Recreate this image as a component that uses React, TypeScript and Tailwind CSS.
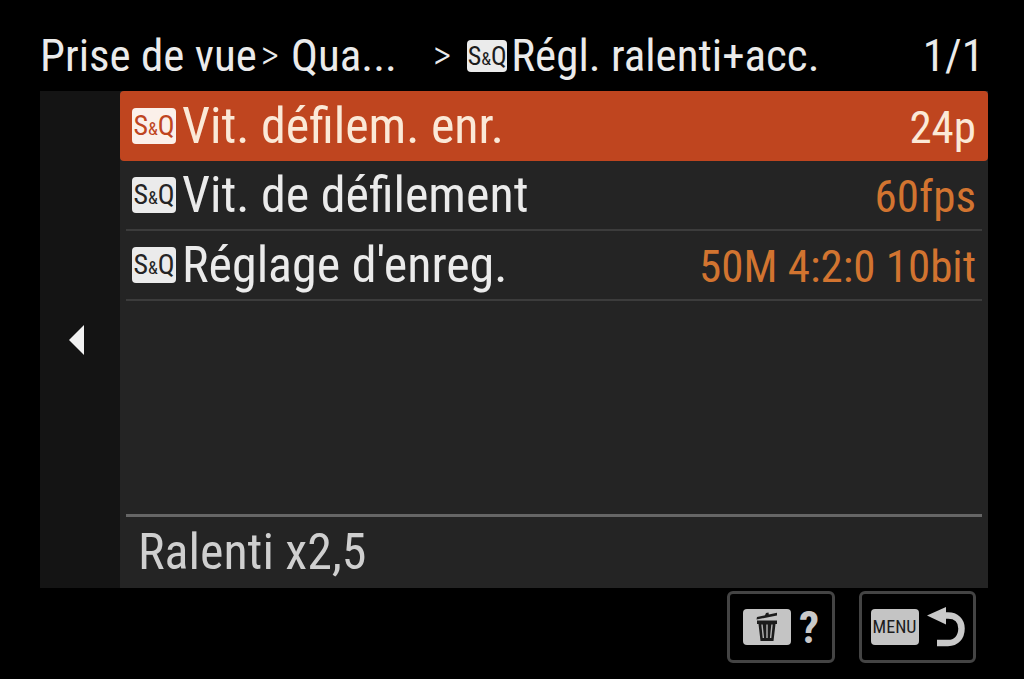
import clsx from 'clsx'

interface MenuItem {
  label: string
  value: string
}

const MENU_ITEMS: MenuItem[] = [
  { label: 'Vit. défilem. enr.', value: '24p' },
  { label: 'Vit. de défilement', value: '60fps' },
  { label: "Réglage d'enreg.", value: '50M 4:2:0 10bit' }
]

interface BadgeProps {
  className?: string
}

// Slow & quick motion mode badge
function ModeBadge({ className = '' }: BadgeProps) {
  return (
    <span className={clsx('flex shrink-0 items-baseline justify-center rounded-sm', className)}>
      <span>S</span>
      <span className="text-[18px]">&amp;</span>
      <span>Q</span>
    </span>
  )
}

function TrashIcon() {
  return (
    <svg width="22" height="30" viewBox="0 0 22 30" aria-hidden="true">
      <path d="M0.5 7.5 L1 5 L9 3.2 L10 1 L12.5 0.6 L12.8 2.4 L21 0.8 L21 3.4 Z" fill="#1c1c1c" />
      <path d="M1 8.5 H21 V12 H19.5 L17.5 29 H4.5 L2.5 12 H1 Z" fill="#1c1c1c" />
      <path d="M6 12.5 L7.4 26 M11 12.5 V26 M16 12.5 L14.6 26" stroke="#b4b4b4" strokeWidth="1.4" />
    </svg>
  )
}

function BackIcon() {
  return (
    <svg width="38" height="40" viewBox="0 0 38 40" aria-hidden="true">
      <path d="M0 8.5 L19 0 V17.5 Z" fill="#c9c9c9" />
      <path
        d="M16 8.5 H21 C29 8.5 34.5 13.5 34.5 21.5 C34.5 30.5 29 36 21 36 H10"
        fill="none"
        stroke="#c9c9c9"
        strokeWidth="6.5"
      />
    </svg>
  )
}

export default function App() {
  return (
    <div className="flex min-h-screen flex-col bg-black pr-9 pl-10 font-['Roboto_Condensed',Roboto,sans-serif] text-[#ebebeb]">
      {/* Breadcrumb */}
      <header className="flex items-center pt-8 pb-[11px] text-[45px] leading-[48px] whitespace-nowrap">
        <nav className="flex flex-1 items-center">
          <a href="#shooting">Prise de vue</a>
          <span className="ml-1 text-[40px] font-light">&gt;</span>
          <a href="#quality" className="ml-3">Qua...</a>
          <span className="ml-9 text-[40px] font-light">&gt;</span>
          <ModeBadge className="mr-1 ml-4 h-8 w-10 bg-[#ebebeb] text-[26px] leading-8 text-[#1c1c1c]" />
          <span>Régl. ralenti+acc.</span>
        </nav>
        <span className="pr-1">1/1</span>
      </header>

      {/* Menu panel */}
      <main className="flex flex-1">
        <div className="flex w-20 shrink-0 items-center justify-center bg-[#141414] pr-2">
          <button type="button" aria-label="Page précédente">
            <svg width="15" height="30" viewBox="0 0 15 30" aria-hidden="true">
              <path d="M15 0 V30 L0 15 Z" fill="#f2f2f2" />
            </svg>
          </button>
        </div>

        <div className="flex flex-1 flex-col bg-[#242424]">
          <ul>
            {MENU_ITEMS.map((item, index) => {
              const selected = index === 0
              return (
                <li key={item.label} className={clsx('h-[70px]', selected ? 'rounded-sm bg-[#bf451f]' : 'px-1.5')}>
                  <button
                    type="button"
                    className={clsx(
                      'flex h-full w-full items-center gap-1.5 text-left',
                      selected ? 'px-3 text-[#fbe9d7]' : 'border-b-2 border-[#3c3c3c] px-1.5'
                    )}
                  >
                    <ModeBadge
                      className={clsx(
                        'h-9 w-11 text-[28px] leading-9',
                        selected ? 'bg-[#fbf0ea] text-[#bf451f]' : 'bg-[#ebebeb] text-[#242424]'
                      )}
                    />
                    <span className="flex flex-1 items-baseline justify-between">
                      <span className="text-[50px] leading-none">{item.label}</span>
                      <span className={clsx('text-[45px] leading-none', !selected && 'text-[#d27430]')}>
                        {item.value}
                      </span>
                    </span>
                  </button>
                </li>
              )
            })}
          </ul>

          <p className="mx-1.5 mt-auto h-[74px] border-t-[3px] border-[#666666] px-3 text-[50px] leading-[70px] text-[#cfcfcf]">
            Ralenti x2,5
          </p>
        </div>
      </main>

      {/* Key hints */}
      <footer className="flex justify-end gap-6 pt-[3px] pr-3 pb-4">
        <button
          type="button"
          aria-label="Aide"
          className="flex h-[72px] w-[108px] items-center justify-center gap-2 rounded-md border-3 border-[#444444]"
        >
          <span className="flex h-9 w-12 items-center justify-center rounded-sm bg-[#c4c4c4]">
            <TrashIcon />
          </span>
          <span className="text-[45px] leading-none font-bold text-[#c9c9c9]">?</span>
        </button>
        <button
          type="button"
          aria-label="Retour"
          className="flex h-[72px] w-[117px] items-center justify-center gap-2 rounded-md border-3 border-[#444444]"
        >
          <span className="flex h-9 w-12 items-center justify-center rounded-sm bg-[#c4c4c4] text-[18px] leading-none text-[#1c1c1c]">
            MENU
          </span>
          <BackIcon />
        </button>
      </footer>
    </div>
  )
}
